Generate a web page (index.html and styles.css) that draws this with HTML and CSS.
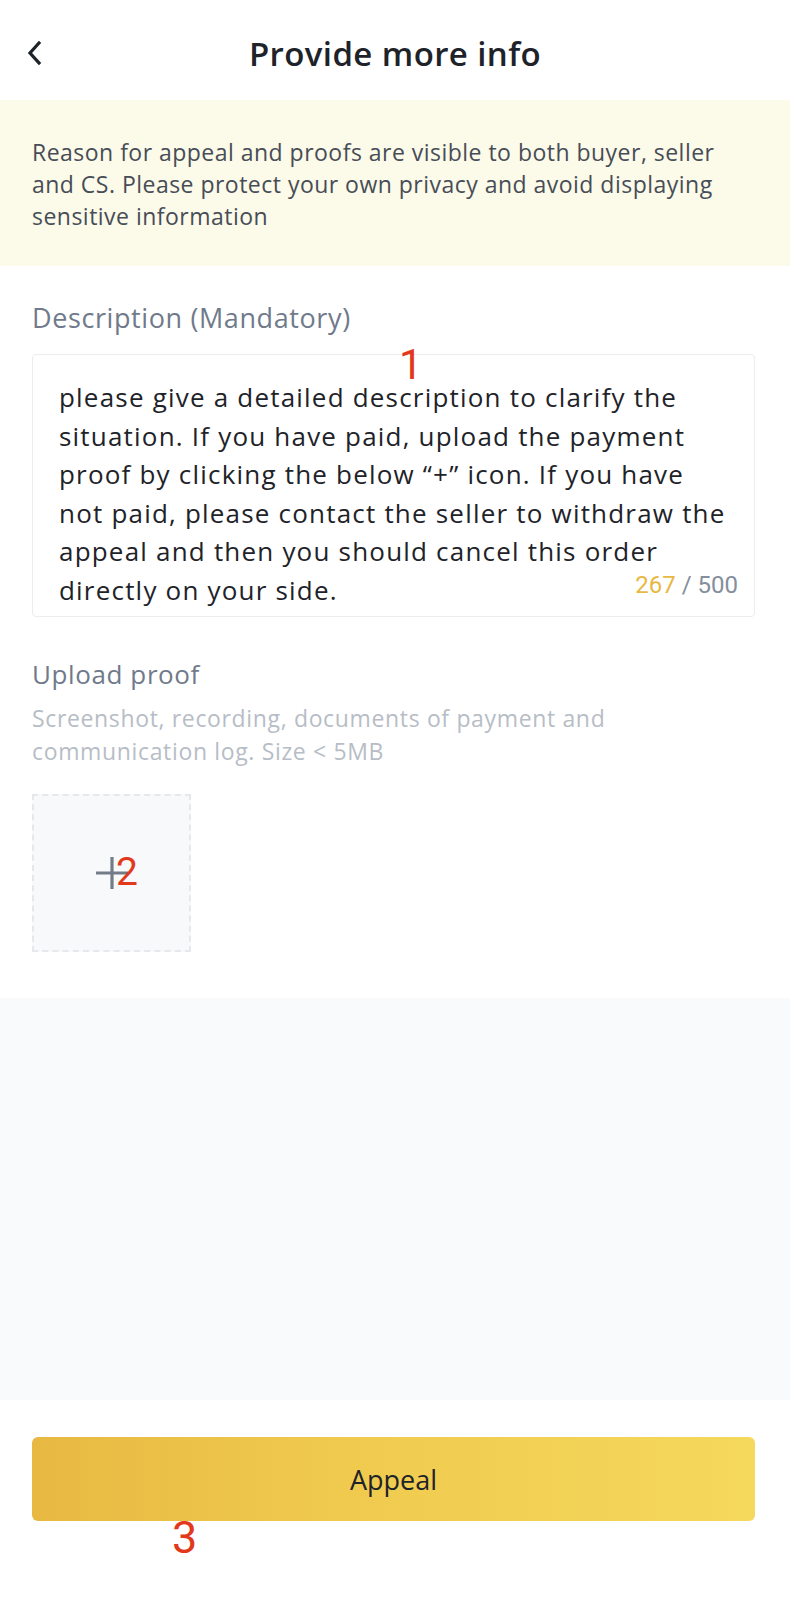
FILE: index.html
```html
<!DOCTYPE html>
<html lang="en">
<head>
    <meta charset="UTF-8">
    <meta name="viewport" content="width=device-width, initial-scale=1.0">
    <title>Provide more info</title>
    <link rel="stylesheet" href="styles.css">
</head>
<body>
    <header class="topbar">
        <a href="#" class="back" aria-label="Back">
            <svg width="16" height="24" viewBox="0 0 16 24">
                <path d="M12 2 L3 12 L12 22" fill="none" stroke="#1e2329" stroke-width="3.2" stroke-linecap="square"/>
            </svg>
        </a>
        <h1 class="title">Provide more info</h1>
    </header>

    <div class="notice">
        Reason for appeal and proofs are visible to both buyer, seller and CS. Please protect your own privacy and avoid displaying sensitive information
    </div>

    <main class="form">
        <div class="label">Description (Mandatory)</div>
        <div class="desc-box">
            <p class="desc-text">please give a detailed description to clarify the situation. If you have paid, upload the payment proof by clicking the below “+” icon. If you have not paid, please contact the seller to withdraw the appeal and then you should cancel this order directly on your side.</p>
            <span class="counter"><span class="count">267</span> / 500</span>
            <span class="mark mark-1">1</span>
        </div>

        <div class="label upload-label">Upload proof</div>
        <div class="hint">Screenshot, recording, documents of payment and communication log. Size &lt; 5MB</div>

        <div class="upload-box">
            <svg width="32" height="32" viewBox="0 0 32 32">
                <path d="M16 0 V32 M0 16 H32" stroke="#737b88" stroke-width="3.2"/>
            </svg>
            <span class="mark mark-2">2</span>
        </div>
    </main>

    <div class="filler"></div>

    <footer class="actions">
        <button class="appeal-btn">Appeal</button>
        <span class="mark mark-3">3</span>
    </footer>
</body>
</html>
```

FILE: styles.css
```css
body {
    margin: 0;
    padding: 0;
    font-family: "Open Sans", "Liberation Sans", sans-serif;
    background-color: #fff;
    color: #1e2329;
    display: flex;
    flex-direction: column;
    min-height: 100vh;
}

.topbar {
    height: 100px;
    display: flex;
    align-items: center;
    justify-content: center;
    position: relative;
}

.back {
    position: absolute;
    left: 27px;
    top: 41px;
    line-height: 0;
}

.title {
    margin: 6px 0 0;
    font-size: 33px;
    font-weight: 600;
    letter-spacing: 0.4px;
    color: #1e2329;
}

.notice {
    background-color: #fcfae8;
    color: #474d57;
    font-size: 23px;
    line-height: 32px;
    letter-spacing: 0.48px;
    padding: 36px 40px 34px 32px;
}

.form {
    padding: 34px 35px 46px 32px;
}

.label {
    font-size: 27px;
    line-height: 36px;
    letter-spacing: 0.6px;
    color: #707a8a;
}

.desc-box {
    position: relative;
    margin-top: 18px;
    height: 263px;
    box-sizing: border-box;
    border: 1.5px solid #eaecef;
    border-radius: 4px;
    padding: 23px 22px 0 26px;
}

.desc-text {
    margin: 0;
    font-size: 26px;
    line-height: 38.6px;
    letter-spacing: 1.2px;
    color: #1e2329;
}

.counter {
    position: absolute;
    right: 16px;
    bottom: 17px;
    font-family: Roboto, sans-serif;
    font-size: 24px;
    line-height: 28px;
    color: #848e9c;
    background: #fff;
}

.count {
    color: #e8b842;
}

.upload-label {
    margin-top: 39px;
    font-size: 26px;
    letter-spacing: 0.6px;
}

.hint {
    margin-top: 10px;
    font-size: 23px;
    line-height: 33px;
    letter-spacing: 0.65px;
    color: #b7bdc6;
    max-width: 640px;
}

.upload-box {
    position: relative;
    margin-top: 26px;
    width: 159px;
    height: 158px;
    box-sizing: border-box;
    border: 2px dashed #e6e8eb;
    background-color: #f8f9fa;
    display: flex;
    align-items: center;
    justify-content: center;
}

.filler {
    flex-grow: 1;
    background-color: #f9fafb;
}

.actions {
    position: relative;
    height: 200px;
    padding: 37px 35px 0 32px;
    box-sizing: border-box;
}

.appeal-btn {
    display: block;
    width: 100%;
    height: 84px;
    border: none;
    border-radius: 6px;
    background: linear-gradient(90deg, #e8b942 0%, #efc94d 40%, #f5d95c 100%);
    font-family: "Open Sans", sans-serif;
    font-size: 27px;
    color: #1e2329;
    cursor: pointer;
}

.mark {
    position: absolute;
    color: #e2391c;
    font-family: Roboto, sans-serif;
    line-height: 1;
}

.mark-1 {
    left: 366px;
    top: -11px;
    font-size: 42px;
}

.mark-2 {
    left: 82px;
    top: 57px;
    font-size: 39px;
}

.mark-3 {
    left: 172px;
    top: 115px;
    font-size: 45px;
}
```
